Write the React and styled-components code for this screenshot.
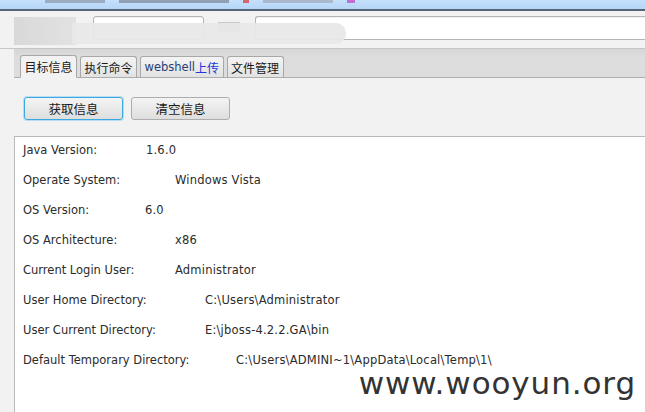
import React from "react";
import styled, { createGlobalStyle } from "styled-components";

const GlobalStyle = createGlobalStyle`
  html, body {
    margin: 0;
    padding: 0;
    background: #f2f2f2;
    overflow: hidden;
  }
  body {
    font-family: "DejaVu Sans", "Noto Sans CJK SC", sans-serif;
  }
`;

const rows = [
  { label: "Java Version:", value: "1.6.0", indent: 123 },
  { label: "Operate System:", value: "Windows Vista", indent: 152 },
  { label: "OS Version:", value: "6.0", indent: 122 },
  { label: "OS Architecture:", value: "x86", indent: 152 },
  { label: "Current Login User:", value: "Administrator", indent: 152 },
  { label: "User Home Directory:", value: "C:\\Users\\Administrator", indent: 182 },
  { label: "User Current Directory:", value: "E:\\jboss-4.2.2.GA\\bin", indent: 182 },
  {
    label: "Default Temporary Directory:",
    value: "C:\\Users\\ADMINI~1\\AppData\\Local\\Temp\\1\\",
    indent: 213,
  },
];

const tabs = ["目标信息", "执行命令", "webshell上传", "文件管理"];

export default function App() {
  return (
    <Window>
      <GlobalStyle />
      <TitleBar>
        <Smudge w={60} color="#8a95a8" />
        <Smudge w={110} color="#7b8597" />
        <Smudge w={6} color="#e03030" />
        <Smudge w={70} color="#a0a8b8" />
        <Smudge w={8} color="#c040c0" />
      </TitleBar>
      <TopForm>
        <BlurLabel />
        <Field w={109} />
        <FieldLabel />
        <Field grow />
        <BlurOverlay />
      </TopForm>
      <Main>
        <TabStrip>
          {tabs.map((t, i) => (
            <Tab key={t} active={i === 0}>
              {t === "webshell上传" ? (
                <>
                  <Latin>webshell</Latin>
                  <Blue>上传</Blue>
                </>
              ) : (
                t
              )}
            </Tab>
          ))}
        </TabStrip>
        <ButtonBar>
          <Button focused>获取信息</Button>
          <Button>清空信息</Button>
        </ButtonBar>
        <InfoPanel>
          {rows.map((r) => (
            <Row key={r.label} indent={r.indent}>
              <span>{r.label}</span>
              <Value>{r.value}</Value>
            </Row>
          ))}
          <Watermark>www.wooyun.org</Watermark>
        </InfoPanel>
      </Main>
    </Window>
  );
}

const Window = styled.div`
  width: 645px;
  height: 412px;
  display: flex;
  flex-direction: column;
  background: #f2f2f2;
  overflow: hidden;
`;

const TitleBar = styled.div`
  height: 9px;
  flex: none;
  display: flex;
  align-items: flex-start;
  gap: 14px;
  padding-left: 45px;
  background: linear-gradient(#c4e0fb, #b5d6f8);
  border-bottom: 2px solid #56657a;
`;

const Smudge = styled.div`
  width: ${(p) => p.w}px;
  height: 3px;
  background: ${(p) => p.color};
  opacity: 0.7;
`;

const TopForm = styled.div`
  position: relative;
  height: 38px;
  flex: none;
  display: flex;
  align-items: flex-start;
  padding: 5px 0 0 14px;
  box-sizing: border-box;
  background: #f2f2f2;
  border-bottom: 1px solid #c6c6c6;
`;

const BlurLabel = styled.div`
  width: 62px;
  height: 28px;
  margin-top: 1px;
  margin-right: 17px;
  background: linear-gradient(90deg, #d2d2d2, #dedede);
  opacity: 0.8;
`;

const Field = styled.div`
  width: ${(p) => (p.grow ? "auto" : `${p.w}px`)};
  flex: ${(p) => (p.grow ? "1" : "none")};
  height: 22px;
  background: #fff;
  border: 1px solid #b4b4b4;
  border-right: ${(p) => (p.grow ? "none" : "1px solid #b4b4b4")};
  border-radius: ${(p) => (p.grow ? "3px 0 0 3px" : "3px")};
  box-shadow: inset 0 1px 1px rgba(0, 0, 0, 0.06);
`;

const FieldLabel = styled.div`
  width: 22px;
  height: 10px;
  margin: 6px 15px 0 14px;
  background: #c8c8c8;
`;

const BlurOverlay = styled.div`
  position: absolute;
  left: 72px;
  top: 12px;
  width: 274px;
  height: 21px;
  border-radius: 0 10px 10px 0;
  background: #e8e8e8;
  opacity: 0.95;
`;

const Main = styled.div`
  flex: 1;
  display: flex;
  flex-direction: column;
  padding-left: 14px;
`;

const TabStrip = styled.div`
  height: 28px;
  flex: none;
  display: flex;
  align-items: flex-end;
  gap: 3px;
  padding-left: 6px;
  background: linear-gradient(#d6d6d6, #dddddd 30%);
  border-bottom: 1px solid #adadad;
`;

const Tab = styled.div`
  height: ${(p) => (p.active ? "23px" : "22px")};
  display: flex;
  align-items: center;
  padding: 0 3.5px;
  margin-bottom: -1px;
  box-sizing: border-box;
  font-family: "Noto Sans CJK SC", sans-serif;
  font-size: 12px;
  color: #1a1a1a;
  border: 1px solid #a8a8a8;
  border-bottom: ${(p) => (p.active ? "1px solid #f2f2f2" : "1px solid #adadad")};
  border-radius: 3px 3px 0 0;
  background: ${(p) =>
    p.active ? "#f2f2f2" : "linear-gradient(#f4f4f4, #e2e2e2)"};
`;

const Latin = styled.span`
  font-family: "DejaVu Sans", sans-serif;
  font-size: 11.5px;
  color: #27407a;
`;

const Blue = styled.span`
  color: #2236d8;
`;

const ButtonBar = styled.div`
  height: 59px;
  flex: none;
  display: flex;
  gap: 8px;
  padding: 19px 0 0 10px;
  box-sizing: border-box;
  border-bottom: 1px solid #b9b9b9;
`;

const Button = styled.div`
  width: 99px;
  height: 23px;
  box-sizing: border-box;
  display: flex;
  align-items: center;
  justify-content: center;
  font-family: "Noto Sans CJK SC", sans-serif;
  font-size: 12.5px;
  color: #1a1a1a;
  border: 1px solid ${(p) => (p.focused ? "#3ca8e0" : "#adadad")};
  box-shadow: ${(p) => (p.focused ? "0 0 0 1px #b5def4" : "none")};
  border-radius: 3px;
  background: linear-gradient(#f4f4f4, #dedede);
`;

const InfoPanel = styled.div`
  position: relative;
  flex: 1;
  display: flex;
  flex-direction: column;
  gap: 18px;
  padding: 7px 0 0 8px;
  background: #fff;
  border-left: 1px solid #b9b9b9;
`;

const Row = styled.div`
  height: 12px;
  line-height: 12px;
  display: grid;
  grid-template-columns: ${(p) => p.indent}px auto;
  align-items: center;
  font-family: "DejaVu Sans", sans-serif;
  font-size: 11.5px;
  color: #2b2b2b;
  white-space: nowrap;
`;

const Value = styled.span`
  letter-spacing: 0.2px;
`;

const Watermark = styled.div`
  position: absolute;
  right: 9px;
  top: 231px;
  line-height: 1;
  font-family: "DejaVu Sans", sans-serif;
  font-size: 31px;
  color: #333333;
  letter-spacing: 0.9px;
`;
